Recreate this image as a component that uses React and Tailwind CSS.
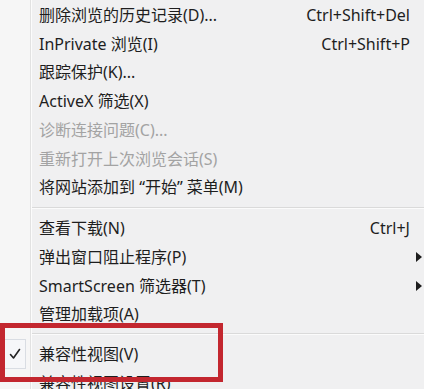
import React from "react";

const groups = [
  [
    { label: "删除浏览的历史记录(D)...", shortcut: "Ctrl+Shift+Del" },
    { label: "InPrivate 浏览(I)", shortcut: "Ctrl+Shift+P" },
    { label: "跟踪保护(K)..." },
    { label: "ActiveX 筛选(X)" },
    { label: "诊断连接问题(C)...", disabled: true },
    { label: "重新打开上次浏览会话(S)", disabled: true },
    { label: "将网站添加到 “开始” 菜单(M)" },
  ],
  [
    { label: "查看下载(N)", shortcut: "Ctrl+J" },
    { label: "弹出窗口阻止程序(P)", submenu: true },
    { label: "SmartScreen 筛选器(T)", submenu: true },
    { label: "管理加载项(A)" },
  ],
  [
    { label: "兼容性视图(V)", checked: true },
    { label: "兼容性视图设置(R)" },
  ],
];

function Check() {
  return (
    <div className="absolute left-[3px] top-[-1px] w-[23px] h-[30px] border border-[#d9dde3] bg-[#f6f7f9] flex items-center justify-center">
      <svg width="12" height="12" viewBox="0 0 12 12" fill="none">
        <path d="M1.5 6.5 L4.5 10 L10.5 1.5" stroke="#222" strokeWidth="1.6" strokeLinecap="round" strokeLinejoin="round" />
      </svg>
    </div>
  );
}

function Row({ item }) {
  return (
    <div
      className={`relative h-[28.75px] flex items-center pl-[39px] pr-[2px] text-[16px] whitespace-nowrap ${
        item.disabled ? "text-[#a3a3a3]" : "text-[#1e1e1e]"
      }`}
    >
      {item.checked && <Check />}
      <span>{item.label}</span>
      <span className="ml-auto">{item.shortcut}</span>
      <span className="w-[12px] flex justify-end">
        {item.submenu && (
          <svg width="6" height="10" viewBox="0 0 6 10">
            <path d="M0 0 L6 5 L0 10 Z" fill="#1e1e1e" />
          </svg>
        )}
      </span>
    </div>
  );
}

function Separator({ h }) {
  return (
    <div className={`${h} flex flex-col justify-center pl-[32px]`}>
      <div className="border-t border-[#dadada]" />
      <div className="border-t border-[#fbfbfb]" />
    </div>
  );
}

export default function App() {
  return (
    <div
      className="relative w-[424px] h-[389px] overflow-hidden bg-[linear-gradient(to_right,#f6f6f6_30px,#e2e2e2_30px,#e2e2e2_31px,#fcfcfc_31px,#fcfcfc_32px,#f0f0f1_32px)]"
      style={{ fontFamily: '"Noto Sans", "Noto Sans CJK SC", sans-serif' }}
    >
      <div className="pt-[0.5px]">
        {groups.map((g, gi) => (
          <div key={gi}>
            {gi > 0 && <Separator h={gi === 1 ? "h-[12px]" : "h-[11px]"} />}
            {g.map((item, i) => (
              <Row key={i} item={item} />
            ))}
          </div>
        ))}
      </div>
      {/* red annotation box */}
      <div className="absolute left-0 top-[323px] w-[223px] h-[59px] border-[5px] border-[#c3272f]" />
    </div>
  );
}
